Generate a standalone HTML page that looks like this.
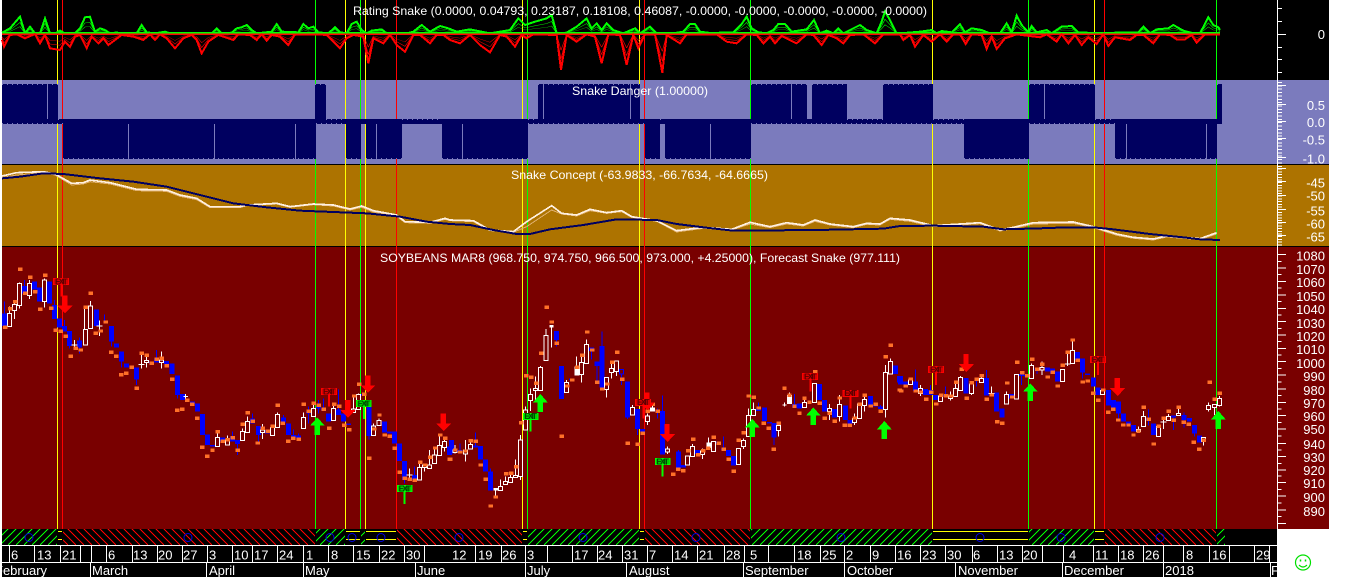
<!DOCTYPE html>
<html><head><meta charset="utf-8"><title>Soybeans chart</title>
<style>html,body{margin:0;padding:0;background:#fff;width:1352px;height:577px;overflow:hidden}svg{display:block}text{font-family:"Liberation Sans",Arial,sans-serif;fill:#fff}
.xr{fill:#5a0000;font-size:25px;font-weight:bold}.xg{fill:#004a00;font-size:25px;font-weight:bold}</style></head>
<body>
<svg xmlns="http://www.w3.org/2000/svg" width="1352" height="577" viewBox="0 0 1352 577">
<defs>
<clipPath id="cg"><path d="M2 529h55v16H2zM316 529h29v16h-29zM361 529h4v16h-4zM528 529h111v16H528zM751 529h181v16H751zM1029 529h65v16h-65zM1217 529h8v16h-8z"/></clipPath>
<clipPath id="cr"><path d="M63 529h252v16H63zM397 529h125v16H397zM645 529h105v16H645zM1105 529h111v16h-111z"/></clipPath>
<path id="d10" fill="none" shape-rendering="crispEdges" d="M0 545l16-16m-8 16l16-16m-8 16l16-16m-8 16l16-16m-8 16l16-16m-8 16l16-16m-8 16l16-16m-8 16l16-16m-8 16l16-16m-8 16l16-16"/>
<g id="dd">
<use href="#d10" x="-16"/><use href="#d10" x="64"/><use href="#d10" x="144"/><use href="#d10" x="224"/><use href="#d10" x="304"/><use href="#d10" x="384"/><use href="#d10" x="464"/><use href="#d10" x="544"/><use href="#d10" x="624"/><use href="#d10" x="704"/><use href="#d10" x="784"/><use href="#d10" x="864"/><use href="#d10" x="944"/><use href="#d10" x="1024"/><use href="#d10" x="1104"/><use href="#d10" x="1184"/><use href="#d10" x="1264"/>
</g>
<clipPath id="ax"><rect x="2" y="545" width="1275" height="32"/></clipPath>
<path id="gp" fill="none" d="M6 98L30 85 60 50 75 100 90 80 105 100 120 100 135 55 150 100 165 100 180 92 195 100 225 100 240 85 255 52 270 50 285 95 300 85 315 90 330 100 345 98 410 100 425 75 440 97 465 100 495 95 510 100 635 100 650 85 665 100 695 98 710 85 725 82 740 75 755 90 770 100 815 95 830 72 845 95 895 97 910 72 925 85 940 80 955 97 985 100 1005 82 1020 97 1040 100 1055 72 1070 65 1085 90 1100 100 1115 92 1145 88 1160 100 1220 100 1240 95 1265 75 1290 95 1320 78 1345 85 1370 95 1410 88 1470 100 1500 95 1530 90 1555 55 1575 75 1605 65 1640 55 1655 45 1670 100 1700 98 1730 80 1760 55 1775 85 1790 70 1805 90 1820 70 1840 90 1870 100 1905 85 1920 100 1950 80 1970 100 2020 100 2050 95 2070 72 2085 72 2100 95 2140 100 2170 97 2200 97 2225 72 2240 50 2255 85 2275 97 2300 100 2320 90 2335 72 2355 72 2375 95 2420 88 2442 60 2460 100 2480 92 2500 100 2515 85 2530 100 2560 85 2580 75 2600 90 2630 100 2645 65 2655 35 2670 60 2690 100 2700 100 2760 95 2795 90 2810 100 2825 93 2855 97 2880 73 2895 97 2915 85 2945 90 2970 100 3000 100 3020 70 3035 97 3050 47 3065 75 3085 97 3095 78 3110 97 3140 90 3155 100 3185 80 3215 78 3235 97 3300 100 3350 98 3415 97 3430 80 3450 100 3470 88 3505 85 3520 75 3550 92 3580 100 3600 100 3625 52 3640 75 3655 82 3660 90"/>
<path id="rp" fill="none" d="M6 120L12 140 30 105 50 103 75 115 105 102 120 130 135 105 150 145 180 150 195 125 210 140 225 110 240 105 260 145 275 110 295 130 310 115 325 135 345 120 365 105 400 110 430 120 450 103 465 120 480 103 500 115 525 145 550 115 575 105 590 120 605 160 625 125 655 105 700 120 715 103 750 105 770 120 785 103 800 122 815 105 840 110 865 135 885 103 950 103 980 105 1020 145 1040 115 1060 105 1090 110 1105 190 1120 115 1150 130 1170 105 1190 135 1215 155 1240 105 1260 105 1290 130 1310 105 1330 105 1350 120 1380 130 1410 105 1440 135 1470 157 1500 105 1520 110 1545 140 1565 105 1580 115 1600 103 1670 105 1683 210 1700 105 1730 125 1760 103 1785 110 1805 190 1825 103 1860 105 1880 195 1900 105 1915 145 1935 103 1965 103 1987 218 2000 105 2040 130 2060 103 2150 103 2180 125 2210 130 2240 103 2270 105 2290 130 2310 110 2325 130 2345 108 2390 130 2420 103 2440 105 2465 135 2485 105 2510 115 2530 130 2550 105 2590 103 2625 130 2650 103 2700 103 2710 120 2730 105 2745 140 2770 105 2795 125 2820 103 2840 125 2860 103 2880 103 2897 132 2915 103 2945 105 2960 147 2975 110 2990 147 3015 115 3030 110 3050 103 3120 112 3140 103 3170 125 3185 103 3205 130 3225 105 3245 135 3265 112 3290 132 3310 103 3325 138 3345 112 3390 120 3410 105 3430 105 3460 130 3480 103 3510 105 3530 118 3555 118 3575 105 3590 128 3615 103 3660 103"/>
</defs>

<!-- panes -->
<rect x="2" y="0" width="1327" height="80" fill="#000"/>
<rect x="2" y="80" width="1327" height="84" fill="#7b7bbd"/>
<rect x="2" y="164" width="1327" height="1" fill="#000"/>
<rect x="2" y="165" width="1327" height="81" fill="#ad7300"/>
<rect x="2" y="246" width="1327" height="1" fill="#000"/>
<rect x="2" y="247" width="1327" height="282" fill="#790000"/>
<rect x="2" y="529" width="1275" height="48" fill="#000"/>

<!-- vertical signal lines -->
<g shape-rendering="crispEdges" stroke-width="1" fill="none">
<path stroke="#ffff00" d="M57.5 0V529M345.5 0V529M365.5 0V529M522.5 0V529M639.5 0V529M932.5 0V529M1094.5 0V529"/>
<path stroke="#00ff00" d="M315.5 0V529M360.5 0V529M527.5 0V529M750.5 0V529M1028.5 0V529M1216.5 0V529"/>
<path stroke="#ff0000" d="M62.5 0V529M396.5 0V529M644.5 0V529M1104.5 0V529"/>
</g>

<!-- rating curves -->
<g transform="scale(.33333)" shape-rendering="crispEdges">
<g stroke="#00ff00" stroke-width="2">
<use href="#gp" transform="translate(0 100) scale(1 .65) translate(0 -100)"/>
<use href="#gp" transform="translate(0 100) scale(1 .4) translate(0 -100)"/>
</g>
<use href="#gp" stroke="#00ff00" stroke-width="6"/>
<path d="M6 98H3660" stroke="#00ff00" stroke-width="4"/>
<g stroke="#ff0000" stroke-width="2">
<use href="#rp" transform="translate(0 102) scale(1 .7) translate(0 -102)"/>
<use href="#rp" transform="translate(0 102) scale(1 .45) translate(0 -102)"/>
</g>
<use href="#rp" stroke="#ff0000" stroke-width="6"/>
<path d="M6 103H3660" stroke="#ff0000" stroke-width="4"/>
</g>

<!-- danger bars -->
<g shape-rendering="crispEdges" fill="#000060">
<rect x="2" y="119" width="1220" height="5"/>
<path d="M2 84H58V124H2ZM315 84H326V124H315ZM538 84H640V124H538ZM751 84H807V124H751ZM812 84H847V124H812ZM883 84H933V124H883ZM1029 84H1095V124H1029ZM1217 84H1222V122H1217Z"/>
<path d="M63 119H316V159H63ZM346 119H361V159H346ZM366 119H402V159H366ZM442 119H528V159H442ZM645 119H660V159H645ZM665 119H751V159H665ZM964 119H1029V159H964ZM1115 119H1217V159H1115Z"/>
</g>
<g shape-rendering="crispEdges" fill="none" stroke="#7b7bbd" stroke-width="1">
<path d="M47.5 84V119M128.5 124V159M214.5 124V159M295.5 124V159M376.5 124V159M462.5 124V159M543.5 84V119M630.5 84V119M710.5 124V159M791.5 84V119M1044.5 84V119M1126.5 124V159M1206.5 124V159"/>
<path stroke-dasharray="1 4" d="M2 84.5H58M315 84.5H326M538 84.5H640M751 84.5H807M812 84.5H847M883 84.5H933M1029 84.5H1095M1217 84.5H1222"/>
<path stroke-dasharray="1 4" d="M63 158.5H316M346 158.5H361M366 158.5H402M442 158.5H528M645 158.5H660M665 158.5H751M964 158.5H1029M1115 158.5H1217"/>
<path stroke-dasharray="1 4" d="M58 119.5H63M326 119.5H346M402 119.5H442M528 119.5H538M660 119.5H665M847 119.5H883M933 119.5H964M1095 119.5H1115M2 123.5H63M316 123.5H346M528 123.5H645M751 123.5H964M1029 123.5H1115"/>
</g>

<!-- concept curves -->
<g transform="scale(.33333)" fill="none" shape-rendering="crispEdges">
<path stroke="#e0b070" stroke-width="3" d="M6 533L50 525 130 518 165 525 215 555 250 552 270 545 330 552 410 572 500 574 540 589 590 599 630 623 720 623 740 617 830 612 870 622 940 614 1000 618 1050 630 1085 622 1120 636 1190 649 1215 668 1290 670 1335 658 1350 662 1420 665 1470 692 1540 697 1580 680 1655 630 1685 642 1730 648 1770 632 1820 640 1865 635 1895 652 1970 664 2030 696 2110 685 2195 690 2250 672 2310 683 2360 672 2410 678 2445 664 2490 675 2560 683 2600 673 2640 675 2670 658 2730 664 2800 680 2880 675 2940 671 3000 693 3040 686 3100 672 3220 670 3280 683 3350 706 3400 715 3460 720 3500 711 3600 719 3650 702"/>
<path stroke="#fff0e0" stroke-width="5" d="M6 528L50 518 130 515 165 522 215 550 250 548 270 540 330 548 410 568 500 570 540 585 590 595 630 620 720 620 740 615 830 610 870 620 940 612 1000 615 1050 627 1085 618 1120 632 1190 645 1215 665 1290 667 1335 655 1350 660 1420 662 1470 690 1540 695 1580 665 1655 617 1685 640 1730 645 1770 628 1820 638 1865 632 1895 650 1970 662 2030 692 2110 682 2195 688 2250 667 2310 680 2360 668 2410 675 2445 660 2490 672 2560 680 2600 670 2640 672 2670 655 2730 660 2800 677 2880 672 2940 668 3000 690 3040 682 3100 668 3220 666 3280 680 3350 702 3400 712 3460 717 3500 708 3600 716 3650 698"/>
<path stroke="#000060" stroke-width="6" d="M6 535L60 530 130 520 190 522 300 535 400 545 500 560 600 585 700 610 800 622 900 632 1100 640 1200 650 1280 665 1350 672 1410 675 1480 690 1550 702 1590 702 1650 688 1750 675 1850 658 1970 660 2030 672 2110 682 2200 692 2450 690 2650 686 2700 678 2800 677 2950 680 3010 688 3120 685 3200 682 3280 682 3340 688 3450 702 3550 712 3600 718 3660 720"/>
</g>

<!-- candles -->
<g transform="translate(0 250) scale(.33333)" fill="none" shape-rendering="crispEdges">
<path stroke="#0000ff" stroke-width="3" d="M13 155V228M73 90V130M193 210V245M208 243V295M238 262V310M313 193V220M335 228V290M365 305V352M410 352V405M470 300V338M532 376V445M697 545V575M712 570V615M757 490V520M775 528V580M850 495V518M880 538V562M895 550V570M925 470V520M955 450V490M970 445V482M1015 418V495M1107 450V568M1213 633V700M1243 650V690M163 150V207"/>
<path stroke="#0000ff" stroke-width="15" d="M13 190V228M73 108V130M103 95V118M118 113V155M148 95V160M163 165V207M178 205V232M193 228V245M208 243V288M238 272V292M290 178V228M335 228V275M349 280V292M365 305V335M380 340V352M410 352V388M455 335V340M470 325V338M500 333V342M516 340V372M532 376V435M548 432V450M578 455V462M593 460V485M608 492V555M623 553V585M638 585V590M668 562V575M697 560V575M712 570V582M757 505V520M775 528V555M803 540V550M850 503V518M865 520V555M880 555V562M895 557V563M925 485V490M955 470V476M970 476V482M985 490V515M1015 478V495M1030 490V515M1045 520V525M1090 432V437M1107 450V558M1153 515V548M1168 545V550M1184 545V580M1198 580V633M1213 633V690M1243 675V690M1349 590V615"/>
<path stroke="#fff" stroke-width="3" d="M28 170V230M43 152V207M58 97V175M88 90V147M133 85V172M223 270V298M214 285H232M253 173V285M271 153V235M298 212V258M289 228H307M425 305V355M416 343H434M440 312V352M485 305V355M557 432V455M550 440H564M652 545V590M682 556V585M727 535V572M742 500V548M788 522V567M818 525V557M833 487V533M910 487V535M940 465V500M1000 460V512M1060 440V487M1075 430V478M1121 520V557M1137 505V527M1228 655V690M1219 675H1237M1258 635V690M1274 640V665M1289 600V656M1304 590V640M1319 560V617M1333 565V605"/>
<path stroke="#fff" stroke-width="3" fill="#790000" d="M22 190h12v40h-12zM37 163h12v19h-12zM52 100h12v66h-12zM82 100h12v37h-12zM127 90h12v65h-12zM250 238h12v47h-12zM265 168h12v67h-12zM434 332h12v6h-12zM479 330h12v8h-12zM646 562h12v28h-12zM676 570h12v15h-12zM721 545h12v27h-12zM736 515h12v33h-12zM782 540h12v8h-12zM812 532h12v25h-12zM827 494h12v39h-12zM904 503h12v32h-12zM934 475h12v25h-12zM994 476h12v36h-12zM1054 477h12v10h-12zM1069 433h12v45h-12zM1115 528h12v29h-12zM1131 512h12v15h-12zM1252 652h12v38h-12zM1268 645h12v7h-12zM1283 645h12v11h-12zM1298 615h12v25h-12zM1313 587h12v30h-12zM1327 575h12v17h-12z"/>
<g transform="translate(-6 0)"><path stroke="#ff7028" stroke-width="10" d="M15 232h13M30 176h13M45 155h13M60 58h13M75 130h13M90 82h13M105 125h13M120 178h13M135 76h13M153 175h13M167 241h13M182 244h13M197 259h13M212 319h13M227 295h13M242 300h13M257 172h13M272 130h13M287 250h13M302 243h13M317 216h13M333 307h13M348 319h13M363 374h13M378 370h13M395 352h13M410 415h13M425 310h13M440 316h13M455 340h13M470 328h13M485 325h13M500 347h13M516 388h13M531 481h13M546 478h13M561 451h13M576 463h13M591 505h13M606 592h13M621 619h13M637 601h13M653 545h13M668 574h13M683 569h13M698 563h13M713 601h13M728 523h13M743 488h13M758 514h13M773 579h13M788 535h13M803 544h13M818 529h13M833 466h13M848 520h13M864 574h13M879 565h13M896 568h13M911 463h13M926 484h13M941 460h13M956 466h13M971 478h13M987 535h13M1002 463h13M1017 469h13M1032 526h13M1047 539h13M1062 438h13M1077 403h13M1092 433h13M1107 625h13M1122 537h13M1138 495h13M1154 555h13M1169 559h13M1184 595h13M1199 667h13M1214 685h13M1229 688h13M1244 691h13M1260 637h13M1275 645h13M1290 622h13M1305 594h13M1320 555h13M1335 565h13M1349 628h13"/></g>
<path fill="#ff0000" d="M186 137h16v30h16l-23 23-23-23h14zM1035 450h16v30h16l-23 23-23-23h14zM1095 376h16v30h16l-23 23-23-23h14zM1322 490h16v30h16l-23 23-23-23h14z"/>
<path fill="#00ff00" d="M952 502l22 25h-14v28h-16v-28h-14z"/>
<path stroke="#ff0000" stroke-width="6" d="M185 105V140M987 435V470"/>
<g fill="#d80000" stroke="#ff0000" stroke-width="3"><rect x="161" y="86" width="45" height="18"/><rect x="965" y="416" width="45" height="18"/></g>
<path stroke="#00ff00" stroke-width="6" d="M1092 471V507M1214 726V762"/>
<g fill="#00d000" stroke="#00ff00" stroke-width="3"><rect x="1070" y="452" width="43" height="18"/><rect x="1193" y="707" width="43" height="18"/></g>
<text x="165" y="103" class="xr" textLength="38">EXIT</text><text x="969" y="433" class="xr" textLength="38">EXIT</text>
<text x="1073" y="469" class="xg" textLength="38">EXIT</text><text x="1196" y="724" class="xg" textLength="38">EXIT</text>
</g>

<g transform="translate(450 250) scale(.33333)" fill="none" shape-rendering="crispEdges">
<path stroke="#0000ff" stroke-width="3" d="M30 580V606M76 548V592M121 655V722M319 243V290M425 293V328M441 335V395M456 245V413M515 358V405M532 395V507M563 477V555M622 475V505M637 437V613M685 600V655M820 560V600M925 458V483M972 519V585M1033 432V472M1292 465V477"/>
<path stroke="#0000ff" stroke-width="15" d="M5 570V610M30 600V606M76 587V592M91 588V628M106 628V665M121 665V722M319 243V270M334 348V447M365 385V390M425 293V303M441 335V348M456 288V413M532 395V503M563 477V537M578 537V545M622 482V485M637 483V613M685 605V655M700 645V653M742 600V612M806 574V580M820 595V600M836 600V618M851 618V647M925 476V483M943 472V513M958 516V520M972 519V562M1033 462V472M1048 460V475M1108 402V450M1124 450V485M1153 477V503M1186 467V510M1200 510V522M1262 438V466M1277 465V470M1292 470V477M1336 347V372M1348 378V398"/>
<path stroke="#0000ff" stroke-width="3" fill="#790000" d="M509 358h12v14h-12z"/>
<path stroke="#fff" stroke-width="3" d="M15 585V610M46 570V635M61 572V597M136 714V740M151 688V722M166 680V704M181 668V697M196 628V682M211 555V690M226 470V540M241 415V483M256 380V450M271 348V422M288 237V332M304 225V292M349 390V428M380 320V377M395 315V398M410 268V340M470 382V443M485 335V385M500 333V378M547 465V495M592 490V525M607 460V485M652 590V612M712 618V645M727 582V620M757 595V627M776 562V594M791 574V605M866 595V644M881 565V597M895 475V560M910 457V497M986 518V560M997 465H1010M1003 458V470M1018 428V462M1063 445V473M1094 400V458M1138 462V510M1168 435V515M1213 490V525M1228 462V506M1243 435V485M1306 345V503M1321 325V372"/>
<path fill="#fff" d="M130 714h15v8h-15zM298 225h13v8h-13zM373 350h15v27h-15zM600 472h15v13h-15zM769 577h15v17h-15zM1011 435h15v27h-15z"/>
<path stroke="#fff" stroke-width="3" fill="#790000" d="M9 600h12v7h-12zM40 600h12v12h-12zM55 583h12v14h-12zM145 710h12v12h-12zM160 695h12v9h-12zM175 682h12v15h-12zM190 677h12v5h-12zM205 570h12v110h-12zM220 480h12v60h-12zM235 433h12v19h-12zM250 415h12v7h-12zM265 352h12v70h-12zM282 257h12v75h-12zM343 398h12v30h-12zM389 338h12v36h-12zM404 283h12v57h-12zM464 382h12v36h-12zM479 355h12v13h-12zM494 333h12v32h-12zM541 472h12v23h-12zM586 498h12v17h-12zM646 597h12v9h-12zM706 618h12v27h-12zM721 590h12v30h-12zM751 603h12v10h-12zM785 574h12v31h-12zM860 595h12v49h-12zM875 571h12v19h-12zM889 497h12v63h-12zM904 478h12v19h-12zM980 526h12v16h-12zM1057 458h12v15h-12zM1088 400h12v58h-12zM1132 475h12v10h-12zM1162 463h12v37h-12zM1207 505h12v12h-12zM1222 462h12v44h-12zM1237 448h12v18h-12zM1300 367h12v111h-12zM1315 335h12v37h-12z"/>
<g transform="translate(-6 0)"><path stroke="#ff7028" stroke-width="10" d="M0 628h13M15 600h13M30 606h13M46 603h13M62 572h13M77 574h13M92 645h13M107 688h13M122 768h13M137 741h13M168 671h13M183 670h13M198 650h13M213 518h13M228 377h13M243 382h13M258 400h13M273 310h13M290 172h13M305 216h13M320 280h13M335 559h13M351 408h13M366 390h13M381 352h13M396 316h13M411 246h13M426 300h13M441 397h13M456 417h13M471 402h13M486 337h13M501 307h13M516 388h13M533 580h13M563 583h13M578 550h13M593 484h13M608 463h13M623 484h13M669 673h13M684 658h13M699 662h13M714 602h13M729 568h13M744 614h13M759 602h13M774 595h13M791 562h13M806 580h13M821 598h13M836 628h13M851 664h13M866 571h13M881 548h13M896 438h13M911 442h13M926 474h13M941 520h13M956 535h13M971 598h13M986 520h13M1003 415h13M1018 436h13M1033 469h13M1048 490h13M1063 445h13M1078 457h13M1095 365h13M1109 460h13M1124 505h13M1139 490h13M1154 514h13M1169 444h13M1184 526h13M1199 526h13M1214 504h13M1229 463h13M1244 436h13M1262 468h13M1277 463h13M1292 484h13M1307 320h13M1322 286h13M1349 420h13"/></g>
<path stroke="#ff0000" stroke-width="6" d="M580 467V505M1081 390V425M1201 440V475"/>
<path fill="#ff0000" d="M583 427h16v30h16l-22 24-23-24h13zM643 522h16v30h16l-22 24-23-24h13z"/>
<path fill="#00ff00" d="M271 432l22 25h-14v29h-16v-29h-14zM907 507l22 25h-14v29h-16v-29h-14zM1090 472l22 25h-14v28h-16v-28h-14zM1303 513l22 25h-14v29h-16v-29h-14z"/>
<g fill="#d80000" stroke="#ff0000" stroke-width="3"><rect x="557" y="448" width="45" height="18"/><rect x="1058" y="371" width="45" height="18"/><rect x="1179" y="421" width="45" height="18"/></g>
<path stroke="#00ff00" stroke-width="6" d="M242 509V545M638 645V680"/>
<g fill="#00d000" stroke="#00ff00" stroke-width="3"><rect x="220" y="490" width="44" height="18"/><rect x="616" y="626" width="44" height="18"/></g>
<text x="561" y="465" class="xr" textLength="38">EXIT</text><text x="1062" y="388" class="xr" textLength="38">EXIT</text><text x="1183" y="438" class="xr" textLength="38">EXIT</text>
<text x="223" y="507" class="xg" textLength="38">EXIT</text><text x="619" y="643" class="xg" textLength="38">EXIT</text>
</g>

<g transform="translate(900 250) scale(.33333)" fill="none" shape-rendering="crispEdges">
<path stroke="#0000ff" stroke-width="3" d="M46 358V423M92 405V435M137 410V440M229 388V410M259 360V437M364 372V405M411 355V372M548 325V385M655 455V510M746 478V527M821 497V540M852 488V532M883 525V560"/>
<path stroke="#0000ff" stroke-width="15" d="M2 378V403M17 395V403M46 395V423M77 417V435M92 420V435M107 435V450M137 435V440M198 384V430M259 384V437M289 428V485M306 475V503M335 432V445M364 372V378M380 375V380M411 355V362M442 353V365M457 355V370M472 365V395M532 306V330M548 325V368M563 370V375M580 382V410M594 412V435M625 420V467M640 450V472M655 455V490M670 490V515M685 515V525M700 525V545M746 505V512M761 520V555M821 497V502M852 495V510M868 504V515M883 525V550M898 556V578"/>
<path stroke="#fff" stroke-width="3" d="M31 382V403M62 405V438M121 430V455M152 425V452M167 395V440M182 378V422M214 395V435M244 378V397M274 410V440M265 430H283M319 425V462M349 373V447M395 340V386M426 335V375M487 358V394M502 305V348M493 342H511M517 270V340M607 418V433M715 530V548M730 483V530M775 525V560M791 500V537M782 516H800M806 492V512M836 475V497M910 562V586M926 458V485M943 463V495M958 438V470"/>
<path stroke="#fff" stroke-width="3" fill="#790000" d="M25 390h12v13h-12zM56 415h12v15h-12zM115 438h12v17h-12zM146 438h12v7h-12zM161 415h12v25h-12zM176 382h12v40h-12zM208 402h12v28h-12zM238 385h12v12h-12zM313 433h12v29h-12zM343 373h12v74h-12zM389 347h12v39h-12zM420 353h12v7h-12zM481 358h12v36h-12zM511 302h12v38h-12zM601 422h12v11h-12zM709 538h12v6h-12zM724 500h12v30h-12zM769 530h12v30h-12zM800 499h12v13h-12zM830 490h12v7h-12zM904 562h12v13h-12zM920 466h12v12h-12zM937 463h12v9h-12zM952 445h12v21h-12z"/>
<g transform="translate(-6 0)"><path stroke="#ff7028" stroke-width="10" d="M3 423h13M17 408h13M32 387h13M47 423h13M62 426h13M78 448h13M93 427h13M108 462h13M123 436h13M138 437h13M153 438h13M168 397h13M185 358h13M200 445h13M215 398h13M230 388h13M245 377h13M260 448h13M275 435h13M291 515h13M306 520h13M321 399h13M336 441h13M351 337h13M366 368h13M381 377h13M396 328h13M411 358h13M426 343h13M443 381h13M458 367h13M473 408h13M488 346h13M503 307h13M518 270h13M533 331h13M548 396h13M563 393h13M579 430h13M594 451h13M609 420h13M624 487h13M639 478h13M654 510h13M669 525h13M685 525h13M700 555h13M715 544h13M731 472h13M746 508h13M761 582h13M776 529h13M791 505h13M806 484h13M821 511h13M836 472h13M851 517h13M866 523h13M881 577h13M897 598h13M911 571h13M929 397h13M944 448h13M959 430h13"/></g>
<path fill="#ff0000" d="M190 312h16v30h16l-23 24-23-24h14zM644 384h16v30h16l-23 24-23-24h14z"/>
<path fill="#00ff00" d="M391 400l22 25h-14v28h-16v-28h-14zM955 483l22 25h-14v29h-16v-29h-14z"/>
<path stroke="#ff0000" stroke-width="6" d="M108 369V405M594 339V375"/>
<g fill="#d80000" stroke="#ff0000" stroke-width="3"><rect x="86" y="350" width="45" height="18"/><rect x="572" y="320" width="44" height="18"/></g>
<text x="90" y="367" class="xr" textLength="38">EXIT</text><text x="575" y="337" class="xr" textLength="38">EXIT</text>
<!-- price axis ticks -->
<path stroke="#fff" stroke-width="3" d="M1133 14h25M1133 34h12M1133 54h25M1133 74h12M1133 94h25M1133 114h12M1133 135h25M1133 155h12M1133 175h25M1133 195h12M1133 215h25M1133 235h12M1133 255h25M1133 275h12M1133 295h25M1133 315h12M1133 335h25M1133 355h12M1133 375h25M1133 396h12M1133 417h25M1133 437h12M1133 457h25M1133 477h12M1133 497h25M1133 517h12M1133 537h25M1133 558h12M1133 580h25M1133 600h12M1133 620h25M1133 640h12M1133 660h25M1133 678h12M1133 697h25M1133 718h12M1133 738h25M1133 759h12M1133 780h25M1133 800h12M1133 820h25"/>
</g>

<!-- right axis -->
<g shape-rendering="crispEdges" fill="none" stroke="#fff">
<path d="M1277.5 0V529"/>
<path d="M1278 8.5h4M1278 21.5h4M1278 34.5h8M1278 47.5h4M1278 59.5h4M1278 72.5h4"/>
<path stroke-width="4" stroke-dasharray="1 2.35" d="M1280 82V164"/>
<path d="M1278 85.5h8M1278 104.5h8M1278 121.5h8M1278 138.5h8M1278 157.5h8"/>
<path stroke-width="4" stroke-dasharray="1 1.7" d="M1280 166V246"/>
<path d="M1278 168.5h8M1278 181.5h8M1278 195.5h8M1278 209.5h8M1278 222.5h8M1278 235.5h8"/>
</g>
<g font-size="13" text-anchor="end">
<text x="1325" y="39">0</text>
<text x="1325" y="110">0.5</text><text x="1325" y="127">0.0</text><text x="1325" y="144.5">-0.5</text><text x="1325" y="163.5">-1.0</text>
<text x="1325" y="187.5">-45</text><text x="1325" y="200.5">-50</text><text x="1325" y="215.5">-55</text><text x="1325" y="228.5">-60</text><text x="1325" y="241.5">-65</text>
<text x="1325" y="260.5">1080</text><text x="1325" y="274">1070</text><text x="1325" y="287">1060</text><text x="1325" y="301">1050</text><text x="1325" y="314">1040</text><text x="1325" y="328">1030</text><text x="1325" y="341">1020</text><text x="1325" y="354">1010</text><text x="1325" y="368">1000</text><text x="1325" y="381">990</text><text x="1325" y="395">980</text><text x="1325" y="408">970</text><text x="1325" y="421">960</text><text x="1325" y="434">950</text><text x="1325" y="449">940</text><text x="1325" y="462">930</text><text x="1325" y="475">920</text><text x="1325" y="488">910</text><text x="1325" y="502">900</text><text x="1325" y="516">890</text>
</g>

<!-- strip -->
<g clip-path="url(#cg)"><use href="#dd" stroke="#00ff00"/></g>
<g clip-path="url(#cr)"><use href="#dd" stroke="#ff0000" transform="translate(1300 0) scale(-1 1)"/></g>
<path shape-rendering="crispEdges" stroke="#ffff00" fill="none" d="M58 531.5h4M58 539.5h4M346 531.5h14M346 539.5h14M366 531.5h30M366 539.5h30M523 531.5h4M523 539.5h4M640 531.5h4M640 539.5h4M933 531.5h95M933 539.5h95M1095 531.5h9M1095 539.5h9"/>
<g fill="none" stroke="#0000e0" stroke-width="1">
<circle cx="29" cy="537.5" r="4"/><circle cx="188" cy="537.5" r="4"/><circle cx="330" cy="537.5" r="4"/><circle cx="352" cy="537.5" r="4"/><circle cx="381" cy="537.5" r="4"/><circle cx="459" cy="537.5" r="4"/><circle cx="583" cy="537.5" r="4"/><circle cx="696" cy="537.5" r="4"/><circle cx="841" cy="537.5" r="4"/><circle cx="980" cy="537.5" r="4"/><circle cx="1061" cy="537.5" r="4"/><circle cx="1160" cy="537.5" r="4"/>
</g>

<!-- time axis -->
<g shape-rendering="crispEdges" fill="none" stroke="#fff">
<path d="M2 545.5H1277M2 562.5H1277"/>
<path d="M9.5 545V562M34.5 545V562M60.5 545V562M80.5 545V562M91.5 545V562M106.5 545V562M132.5 545V562M157.5 545V562M182.5 545V562M207.5 545V562M232.5 545V562M252.5 545V562M277.5 545V562M303.5 545V562M328.5 545V562M353.5 545V562M379.5 545V562M404.5 545V562M424.5 545V562M475.5 545V562M501.5 545V562M525.5 545V562M547.5 545V562M572.5 545V562M597.5 545V562M622.5 545V562M647.5 545V562M672.5 545V562M697.5 545V562M724.5 545V562M744.5 545V562M768.5 545V562M794.5 545V562M820.5 545V562M844.5 545V562M870.5 545V562M895.5 545V562M920.5 545V562M945.5 545V562M972.5 545V562M997.5 545V562M1022.5 545V562M1042.5 545V562M1063.5 545V562M1093.5 545V562M1118.5 545V562M1143.5 545V562M1163.5 545V562M1183.5 545V562M1209.5 545V562M1229.5 545V562M1254.5 545V562M1269.5 545V562"/>
<path d="M90.5 562V577M206.5 562V577M303.5 562V577M415.5 562V577M525.5 562V577M626.5 562V577M743.5 562V577M844.5 562V577M955.5 562V577M1062.5 562V577M1163.5 562V577M1270.5 562V577"/>
</g>
<g font-size="13" clip-path="url(#ax)">
<text x="11" y="559.5">6</text><text x="37" y="559.5">13</text><text x="62" y="559.5">21</text><text x="108" y="559.5">6</text><text x="133" y="559.5">13</text><text x="158" y="559.5">20</text><text x="183" y="559.5">27</text><text x="209" y="559.5">3</text><text x="234" y="559.5">10</text><text x="254" y="559.5">17</text><text x="279" y="559.5">24</text><text x="306" y="559.5">1</text><text x="331" y="559.5">8</text><text x="356" y="559.5">15</text><text x="381" y="559.5">22</text><text x="406" y="559.5">30</text>
<text x="452" y="559.5">12</text><text x="478" y="559.5">19</text><text x="502" y="559.5">26</text><text x="527" y="559.5">3</text><text x="574" y="559.5">17</text><text x="598" y="559.5">24</text><text x="624" y="559.5">31</text><text x="649" y="559.5">7</text><text x="674" y="559.5">14</text><text x="699" y="559.5">21</text><text x="726" y="559.5">28</text><text x="750" y="559.5">5</text><text x="797" y="559.5">18</text><text x="822" y="559.5">25</text><text x="846" y="559.5">2</text><text x="872" y="559.5">9</text>
<text x="897" y="559.5">16</text><text x="922" y="559.5">23</text><text x="947" y="559.5">30</text><text x="973" y="559.5">6</text><text x="999" y="559.5">13</text><text x="1023" y="559.5">20</text><text x="1069" y="559.5">4</text><text x="1095" y="559.5">11</text><text x="1120" y="559.5">18</text><text x="1145" y="559.5">26</text><text x="1186" y="559.5">8</text><text x="1212" y="559.5">16</text><text x="1256" y="559.5">29</text>
<text x="-5" y="575">February</text><text x="92" y="575">March</text><text x="209" y="575">April</text><text x="305" y="575">May</text><text x="417" y="575">June</text><text x="527" y="575">July</text><text x="629" y="575">August</text><text x="745" y="575">September</text><text x="847" y="575">October</text><text x="958" y="575">November</text><text x="1064" y="575">December</text><text x="1165" y="575">2018</text><text x="1271" y="575">F</text>
</g>

<!-- titles -->
<g font-size="12">
<text x="353" y="15" textLength="574" lengthAdjust="spacingAndGlyphs">Rating Snake (0.0000, 0.04793, 0.23187, 0.18108, 0.46087, -0.0000, -0.0000, -0.0000, -0.0000, -0.0000)</text>
<text x="572" y="95" textLength="136" lengthAdjust="spacingAndGlyphs">Snake Danger (1.00000)</text>
<text x="511" y="179" textLength="257" lengthAdjust="spacingAndGlyphs">Snake Concept (-63.9833, -66.7634, -64.6665)</text>
<text x="380" y="262" textLength="520" lengthAdjust="spacingAndGlyphs">SOYBEANS MAR8 (968.750, 974.750, 966.500, 973.000, +4.25000), Forecast Snake (977.111)</text>
</g>

<!-- smiley -->
<g fill="none" stroke="#00e000" stroke-width="1.2">
<circle cx="1303" cy="562.5" r="7.5"/>
<path d="M1299 565q4 4 8 0"/>
<path d="M1300.5 559.5v2M1305.5 559.5v2" stroke-width="1.5"/>
</g>
</svg>
</body></html>
